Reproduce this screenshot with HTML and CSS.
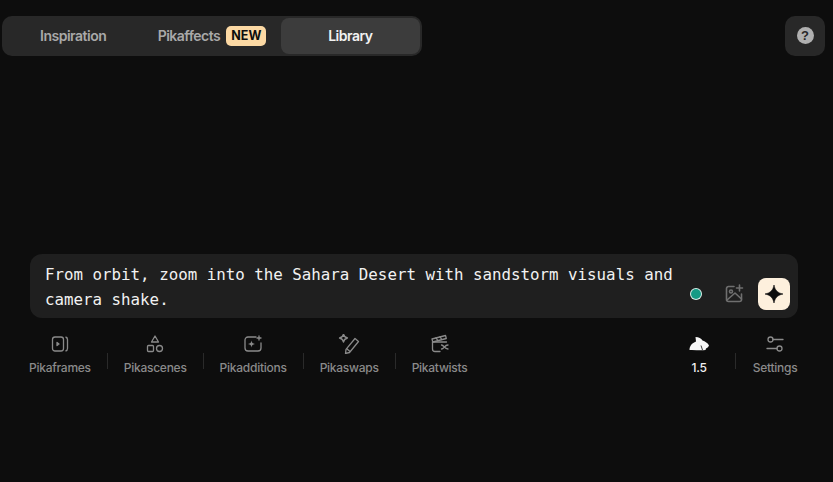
FILE: index.html
```html
<!DOCTYPE html>
<html lang="en">
<head>
<meta charset="utf-8">
<title>Pika</title>
<link rel="stylesheet" href="styles.css">
</head>
<body>
<header class="top">
  <nav class="tabs">
    <a class="tab tab-a">Inspiration</a>
    <a class="tab tab-b">Pikaffects <span class="badge">NEW</span></a>
    <a class="tab tab-c active">Library</a>
  </nav>
  <button class="help"><span class="help-dot">?</span></button>
</header>
<main class="composer">
  <div class="prompt">
    <p class="prompt-text">From orbit, zoom into the Sahara Desert with sandstorm visuals and camera shake.</p>
    <div class="prompt-actions">
      <span class="dot"></span>
      <svg class="img-add" viewBox="0 0 20 20" width="20" height="20" fill="none" stroke="#6f6f6f" stroke-width="1.6" stroke-linecap="round" stroke-linejoin="round"><path d="M10 2.500H4.500a2 2 0 0 0-2 2v11a2 2 0 0 0 2 2h11a2 2 0 0 0 2-2V10"/><circle cx="7" cy="7.500" r="1.500"/><path d="M3 16l8-7 6.500 6"/><path d="M15.500 1v6M12.500 4h6"/></svg>
      <button class="send"><svg viewBox="0 0 20 20" width="20" height="20"><path fill="#0d0d0d" d="M10 1c.9 5 3.500 8 9 9-5.500 1-8.100 4-9 9-.9-5-3.500-8-9-9 5.500-1 8.100-4 9-9z" stroke="#0d0d0d" stroke-width=".6"/></svg></button>
    </div>
  </div>
  <div class="tools">
    <div class="tool-group">
      <div class="tool">
        <svg viewBox="0 0 20 20" width="20" height="20" fill="none" stroke="#8a8a8a" stroke-width="1.300" stroke-linejoin="round"><rect x="2.500" y="3" width="11" height="14" rx="2.500"/><path d="M15.500 3c1.300.3 2 1 2 2.500v9c0 1.500-.7 2.200-2 2.500"/><path d="M7 8.500l2 1.500-2 1.500z" fill="#8a8a8a"/></svg>
        <span>Pikaframes</span>
      </div>
      <i class="sep"></i>
      <div class="tool">
        <svg viewBox="0 0 20 20" width="20" height="20" fill="none" stroke="#8a8a8a" stroke-width="1.300" stroke-linejoin="round"><path d="M10 2l3.500 6H6.500z"/><rect x="2.500" y="11.500" width="6" height="6" rx="1"/><circle cx="14.500" cy="14.500" r="3"/></svg>
        <span>Pikascenes</span>
      </div>
      <i class="sep"></i>
      <div class="tool">
        <svg viewBox="0 0 20 20" width="20" height="20" fill="none" stroke="#8a8a8a" stroke-width="1.300" stroke-linecap="round" stroke-linejoin="round"><path d="M13 3H5a3 3 0 0 0-3 3v8a3 3 0 0 0 3 3h10a3 3 0 0 0 3-3V9"/><path fill="#8a8a8a" stroke="none" d="M8.500 6.500c.4 2.200 1.200 3 3.500 3.500-2.300.5-3.100 1.300-3.500 3.500-.4-2.200-1.200-3-3.500-3.500 2.300-.5 3.100-1.300 3.500-3.500z"/><path d="M16 2v4M14 4h4"/></svg>
        <span>Pikadditions</span>
      </div>
      <i class="sep"></i>
      <div class="tool">
        <svg viewBox="0 0 22 20" width="22" height="20" fill="none" stroke="#8a8a8a" stroke-width="1.300" stroke-linejoin="round"><path d="M5.500 0c.5 2.500 1.400 3.500 4 4-2.600.5-3.500 1.500-4 4-.5-2.500-1.400-3.500-4-4 2.600-.5 3.500-1.500 4-4z"/><path d="M17 4.500l3.500 3-9 11-4 1 .5-4.200z"/><path d="M8.500 14.500l3.500 3"/></svg>
        <span>Pikaswaps</span>
      </div>
      <i class="sep"></i>
      <div class="tool">
        <svg viewBox="0 0 20 20" width="20" height="20" fill="none" stroke="#8a8a8a" stroke-width="1.300" stroke-linecap="round" stroke-linejoin="round"><path d="M2.500 8v7a2.500 2.500 0 0 0 2.500 2.500h5"/><path d="M2.500 8h14"/><path d="M2 5l13.500-3.500.8 3L2.800 8z"/><path d="M6 3.800l1.800 2.700M10 2.800l1.800 2.700"/><path d="M11.500 11c2.500 0 3 4 6.500 4M11.500 15c2.500 0 3-4 6.500-4"/></svg>
        <span>Pikatwists</span>
      </div>
    </div>
    <div class="tool-group">
      <div class="tool tool-model">
        <svg viewBox="0 0 22 20" width="22" height="20"><path fill="#f6f6f6" d="M1.500 16C1.500 12 4 9 8 7.500L7.500 3C11 3 13 4.500 14.500 6.500 17 7.500 20 9 21 11.500 20.500 13 19 14 18 14.500L17.500 16C12 17 7 15.500 1.500 16Z"/><path stroke="#0d0d0d" stroke-width=".8" fill="none" d="M13 11.500l1.500 4.500"/></svg>
        <span>1.5</span>
      </div>
      <i class="sep"></i>
      <div class="tool tool-settings">
        <svg viewBox="0 0 20 20" width="20" height="20" fill="none" stroke="#8a8a8a" stroke-width="1.300" stroke-linecap="round"><circle cx="5.500" cy="5.500" r="2.500"/><path d="M8 5.500h10"/><circle cx="14.500" cy="14.500" r="2.500"/><path d="M12 14.500H2"/></svg>
        <span>Settings</span>
      </div>
    </div>
  </div>
</main>
</body>
</html>
```
FILE: styles.css
```css
* { box-sizing: border-box; }
html, body { height: 100%; }
body {
  margin: 0;
  padding: 16px 8px 0 2px;
  background: #0d0d0d;
  font-family: Inter, "Liberation Sans", sans-serif;
  overflow: hidden;
}
.top {
  display: flex;
  justify-content: space-between;
  align-items: flex-start;
}
.tabs {
  display: flex;
  width: 420px;
  height: 40px;
  padding: 2px;
  border-radius: 10px;
  background: #282828;
}
.tab {
  display: flex;
  align-items: center;
  justify-content: center;
  gap: 6px;
  padding-bottom: 2px;
  border-radius: 8px;
  font-size: 14px;
  font-weight: 600;
  letter-spacing: -0.5px;
  color: #a9a9a9;
}
.tab-a { width: 139px; }
.tab-b { width: 139px; padding-left: 1px; }
.tab-c { width: 140px; }
.tab.active { background: #3c3c3c; color: #f2f2f2; }
.badge {
  margin-top: 2px;
  padding: 2px 5px;
  border-radius: 5px;
  background: #fcd9a4;
  color: #0d0d0d;
  font-size: 12.500px;
  font-weight: 700;
  letter-spacing: 0;
  line-height: 16px;
}
.help {
  display: flex;
  align-items: center;
  justify-content: center;
  width: 40px;
  height: 40px;
  padding: 0;
  border: 0;
  border-radius: 10px;
  background: #282828;
}
.help-dot {
  width: 17px;
  height: 17px;
  margin-top: -1px;
  border-radius: 50%;
  background: #b0b0b0;
  color: #282828;
  font-size: 13px;
  font-weight: 800;
  line-height: 17px;
  text-align: center;
}
.composer { margin: 198px 27px 0 28px; }
.prompt {
  display: flex;
  justify-content: space-between;
  height: 64px;
  padding: 8px 8px 8px 15px;
  border-radius: 12px;
  background: #1f1f1f;
}
.prompt-text {
  width: 640px;
  margin: 0;
  font-family: "DejaVu Sans Mono", "Liberation Mono", monospace;
  font-size: 15.800px;
  line-height: 25px;
  color: #f2f2f2;
}
.prompt-actions {
  display: flex;
  align-items: flex-end;
}
.dot {
  width: 10px;
  height: 10px;
  margin: 0 23px 11px 0;
  border-radius: 50%;
  background: #159a85;
  box-shadow: 0 0 0 1px #d8efe9;
}
.img-add { margin: 0 14px 6px 0; }
.send {
  display: flex;
  align-items: center;
  justify-content: center;
  width: 32px;
  height: 32px;
  padding: 0;
  border: 0;
  border-radius: 8px;
  background: #fdf0dd;
}
.tools {
  display: flex;
  justify-content: space-between;
  margin: 16px 0 0 -1px;
}
.tool-group { display: flex; align-items: center; }
.tool {
  display: flex;
  flex-direction: column;
  align-items: center;
  gap: 5px;
  font-size: 12px;
  font-weight: 500;
  letter-spacing: -0.26px;
  line-height: 18px;
  color: #8a8a8a;
}
.tool svg { display: block; height: 20px; }
.tool-model { padding: 0 9px 0 9px; color: #f2f2f2; }
.tool-settings { min-width: 46px; }
.sep {
  width: 1px;
  height: 16px;
  margin: 10px 16px 0;
  background: #2a2a2a;
}
```
